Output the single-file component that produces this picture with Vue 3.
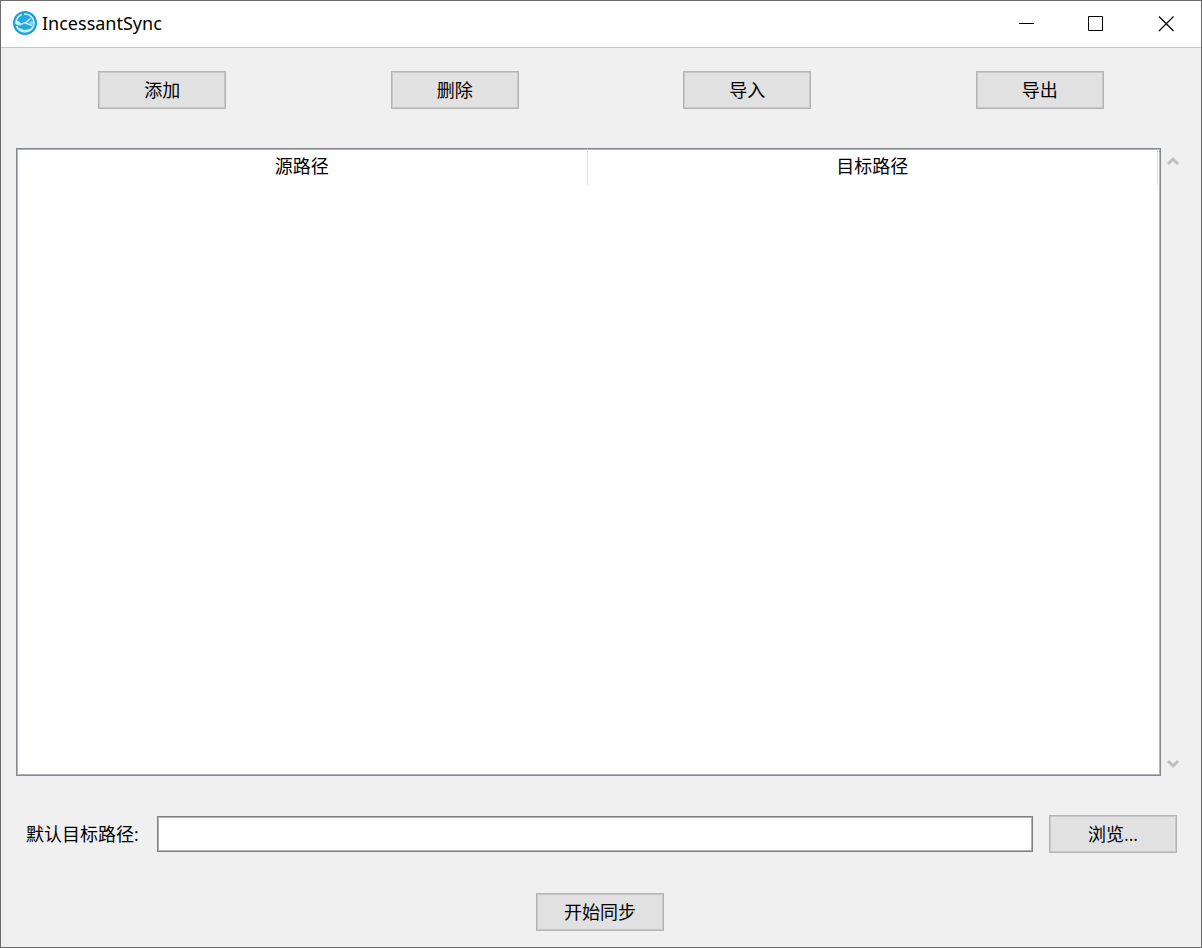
<script setup>
import { ref } from 'vue'

const actions = ['添加', '删除', '导入', '导出']
const columns = ['源路径', '目标路径']
const rows = ref([])
const targetPath = ref('')
</script>

<template>
  <main class="window">
    <header class="titlebar">
      <svg class="logo" viewBox="0 0 24 24" aria-hidden="true">
        <circle cx="12" cy="12" r="12" fill="#1a9fd8" />
        <circle cx="12" cy="12" r="9" fill="#27a8dd" stroke="#cdeefa" stroke-width="1.7" stroke-dasharray="25 2 12 2" />
        <path d="M3 9.500 6 10.500 9 13.200 7 14.500 3 13.500Z" fill="#cdeefa" />
        <path d="M8.500 13 13 11.500 17.500 7.500M12.500 12 19 14.500" fill="none" stroke="#cdeefa" stroke-width="1.4" />
        <path d="M16 12 19 9.500 20.500 12.500 19 14Z" fill="#8dd5f0" />
        <path d="M5 16.500 9 18 11 19 17 18 18.500 16.500 17 19.500 12 21 7 19.500Z" fill="#cdeefa" />
      </svg>
      <h1 class="title">IncessantSync</h1>
      <div class="controls">
        <button type="button" class="control" aria-label="最小化">
          <svg viewBox="0 0 16 16" aria-hidden="true"><path d="M1 8.500H16" /></svg>
        </button>
        <button type="button" class="control" aria-label="最大化">
          <svg viewBox="0 0 16 16" aria-hidden="true"><path d="M.5 1.500H14.500V15.500H.5Z" /></svg>
        </button>
        <button type="button" class="control" aria-label="关闭">
          <svg viewBox="0 0 16 16" aria-hidden="true"><path class="cross" d="M1 1.500 15.500 16M15.500 1.500 1 16" /></svg>
        </button>
      </div>
    </header>

    <nav class="toolbar">
      <button v-for="action in actions" :key="action" type="button" class="button">{{ action }}</button>
    </nav>

    <section class="list">
      <div class="frame">
        <table class="table">
          <thead>
            <tr>
              <th v-for="column in columns" :key="column" scope="col">{{ column }}</th>
            </tr>
          </thead>
          <tbody>
            <tr v-for="row in rows" :key="row.source">
              <td>{{ row.source }}</td>
              <td>{{ row.target }}</td>
            </tr>
          </tbody>
        </table>
      </div>
      <div class="scroller">
        <button type="button" class="arrow" aria-label="向上滚动">
          <svg viewBox="0 0 12 10" aria-hidden="true"><path d="M1 8 6 3l5 5" /></svg>
        </button>
        <button type="button" class="arrow" aria-label="向下滚动">
          <svg viewBox="0 0 12 10" aria-hidden="true"><path d="m1 2 5 5 5-5" /></svg>
        </button>
      </div>
    </section>

    <form class="target" @submit.prevent>
      <label class="label" for="target-path">默认目标路径:</label>
      <input id="target-path" v-model="targetPath" type="text" class="field" />
      <button type="button" class="button">浏览...</button>
    </form>

    <footer class="footer">
      <button type="button" class="button">开始同步</button>
    </footer>
  </main>
</template>

<style>
body {
  margin: 0;
}
</style>

<style scoped>
.window {
  box-sizing: border-box;
  min-height: 100vh;
  display: flex;
  flex-direction: column;
  border: 1px solid #6b6b6b;
  background: #f0f0f0;
  color: #000;
  font-family: "Open Sans", "Noto Sans CJK SC", sans-serif;
  font-size: 18px;
  line-height: 24px;
}

.titlebar {
  box-sizing: border-box;
  display: flex;
  align-items: center;
  height: 47px;
  padding: 0 0 2px 12px;
  border-bottom: 1px solid #c6c6c6;
  background: #fff;
}

.logo {
  width: 24px;
  height: 24px;
}

.title {
  flex: 1;
  margin: 0 0 0 5px;
  font-family: "Noto Sans", sans-serif;
  font-size: 18px;
  font-weight: 400;
}

.controls {
  display: flex;
  align-self: stretch;
}

.control {
  display: flex;
  align-items: center;
  justify-content: center;
  width: 70px;
  padding: 0;
  border: 0;
  background: none;
}

.control svg {
  width: 16px;
  height: 16px;
  overflow: visible;
  fill: none;
  stroke: #000;
  stroke-width: 1;
}

.control .cross {
  stroke-width: 1.2;
}

.toolbar {
  display: grid;
  grid-template-columns: repeat(4, 1fr);
  justify-items: center;
  padding: 23px 15px 39px;
}

.button {
  box-sizing: border-box;
  width: 128px;
  height: 38px;
  padding: 0 0 1px;
  border: 1px solid #b4b4b4;
  box-shadow: inset 0 0 0 1px #c8c8c8;
  background: #e1e1e1;
  color: #000;
  font: inherit;
}

.list {
  flex: 1;
  display: flex;
  padding-left: 15px;
}

.frame {
  flex: 1;
  border: 1px solid #828790;
  box-shadow: inset 0 0 0 1px #b4b7bd;
  background: #fff;
}

.table {
  width: 100%;
  padding-right: 2px;
  border-collapse: separate;
  border-spacing: 0;
  table-layout: fixed;
}

.table th {
  box-sizing: border-box;
  height: 36px;
  padding: 0 0 2px;
  border-right: 1px solid #e0e0e0;
  font-weight: 400;
}

.table td {
  padding: 4px 8px;
}

.scroller {
  display: flex;
  flex-direction: column;
  justify-content: space-between;
  width: 40px;
}

.arrow {
  display: flex;
  align-items: center;
  width: 24px;
  height: 25px;
  padding: 0 0 0 6px;
  border: 0;
  background: none;
}

.arrow svg {
  width: 12px;
  height: 10px;
  fill: none;
  stroke: #bfbfbf;
  stroke-width: 3;
}

.target {
  display: flex;
  align-items: center;
  gap: 16px;
  padding: 39px 24px 40px 25px;
}

.label {
  padding-right: 2px;
}

.field {
  box-sizing: border-box;
  flex: 1;
  min-width: 0;
  height: 36px;
  padding: 0 6px;
  border: 1px solid #7f7f7f;
  border-radius: 0;
  box-shadow: inset 0 0 0 1px #b4b4b4;
  background: #fff;
  font: inherit;
}

.footer {
  display: flex;
  justify-content: center;
  padding: 0 2px 16px 0;
}
</style>
